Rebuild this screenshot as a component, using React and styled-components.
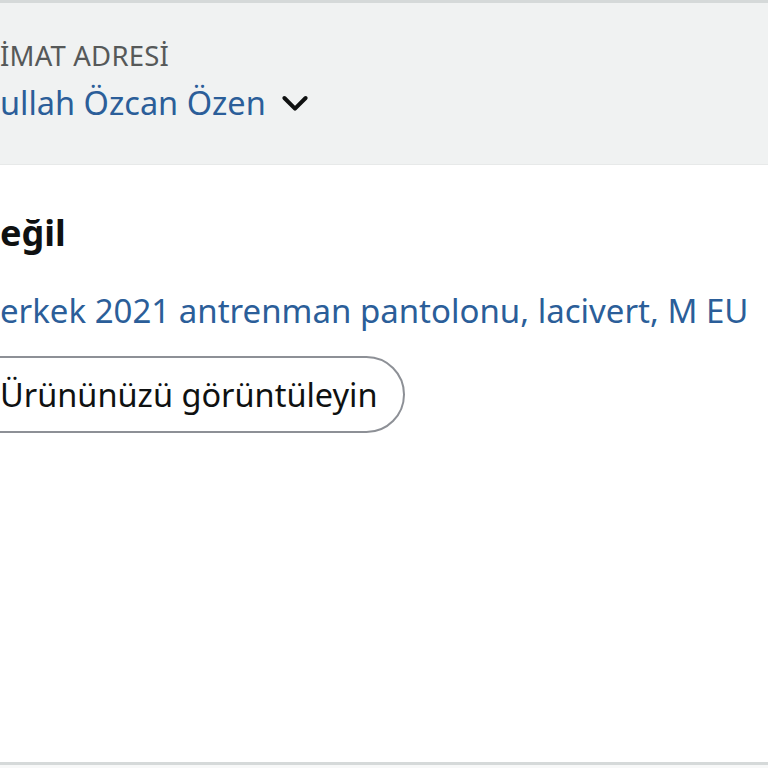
import React from "react";
import styled, { createGlobalStyle } from "styled-components";

const GlobalStyle = createGlobalStyle`
    * { box-sizing: border-box; }
    html, body {
        margin: 0;
        padding: 0;
        background: #fff;
        font-family: "Noto Sans", "Open Sans", Arial, sans-serif;
        color: #0f1111;
    }
`;

function App() {
    return (
        <>
            <GlobalStyle />
            <Page>
                <AddressBar>
                    <AddressLabel>İMAT ADRESİ</AddressLabel>
                    <AddressRow>
                        <AddressName>ullah Özcan Özen</AddressName>
                        <Chevron viewBox="0 0 24 24">
                            <path d="M3.5 8l8.5 8.5 8.5-8.5" />
                        </Chevron>
                    </AddressRow>
                </AddressBar>
                <Content>
                    <Title>eğil</Title>
                    <ProductLink>erkek 2021 antrenman pantolonu, lacivert, M EU</ProductLink>
                    <ViewButton>Ürününüzü görüntüleyin</ViewButton>
                </Content>
                <Spacer />
                <BottomLine />
            </Page>
        </>
    );
}

export default App;

const Page = styled.div`
    width: 768px;
    height: 768px;
    overflow: hidden;
    display: flex;
    flex-direction: column;
    border-top: 3px solid #d5d9d9;
`;

const AddressBar = styled.div`
    background: #f0f2f2;
    height: 162px;
    padding: 34px 0 0 0;
    border-bottom: 1px solid #e7e9e9;
`;

const AddressLabel = styled.div`
    font-size: 27.5px;
    line-height: 38px;
    color: #565959;
    letter-spacing: 0.2px;
`;

const AddressRow = styled.div`
    display: flex;
    align-items: center;
    gap: 14px;
    margin-top: 6px;
`;

const AddressName = styled.div`
    font-size: 32.5px;
    line-height: 44px;
    color: #2b5e99;
`;

const Chevron = styled.svg`
    width: 30px;
    height: 30px;
    fill: none;
    stroke: #0f1111;
    stroke-width: 3.2;
    stroke-linecap: round;
    stroke-linejoin: round;
`;

const Content = styled.div`
    padding-top: 44px;
`;

const Title = styled.h2`
    margin: 0;
    font-size: 36px;
    line-height: 48px;
    font-weight: 700;
`;

const ProductLink = styled.div`
    margin-top: 31px;
    font-size: 33px;
    line-height: 46px;
    color: #2b5e99;
`;

const ViewButton = styled.button`
    margin-top: 22px;
    margin-left: -42px;
    height: 77px;
    padding: 0 25px 0 40px;
    border: 2px solid #8d9096;
    border-radius: 39px;
    background: #fff;
    font-family: inherit;
    font-size: 32.5px;
    color: #0f1111;
`;

const Spacer = styled.div`
    flex: 1;
`;

const BottomLine = styled.div`
    height: 6px;
    border-top: 3px solid #d5d9d9;
    background: #f7f8f8;
`;
